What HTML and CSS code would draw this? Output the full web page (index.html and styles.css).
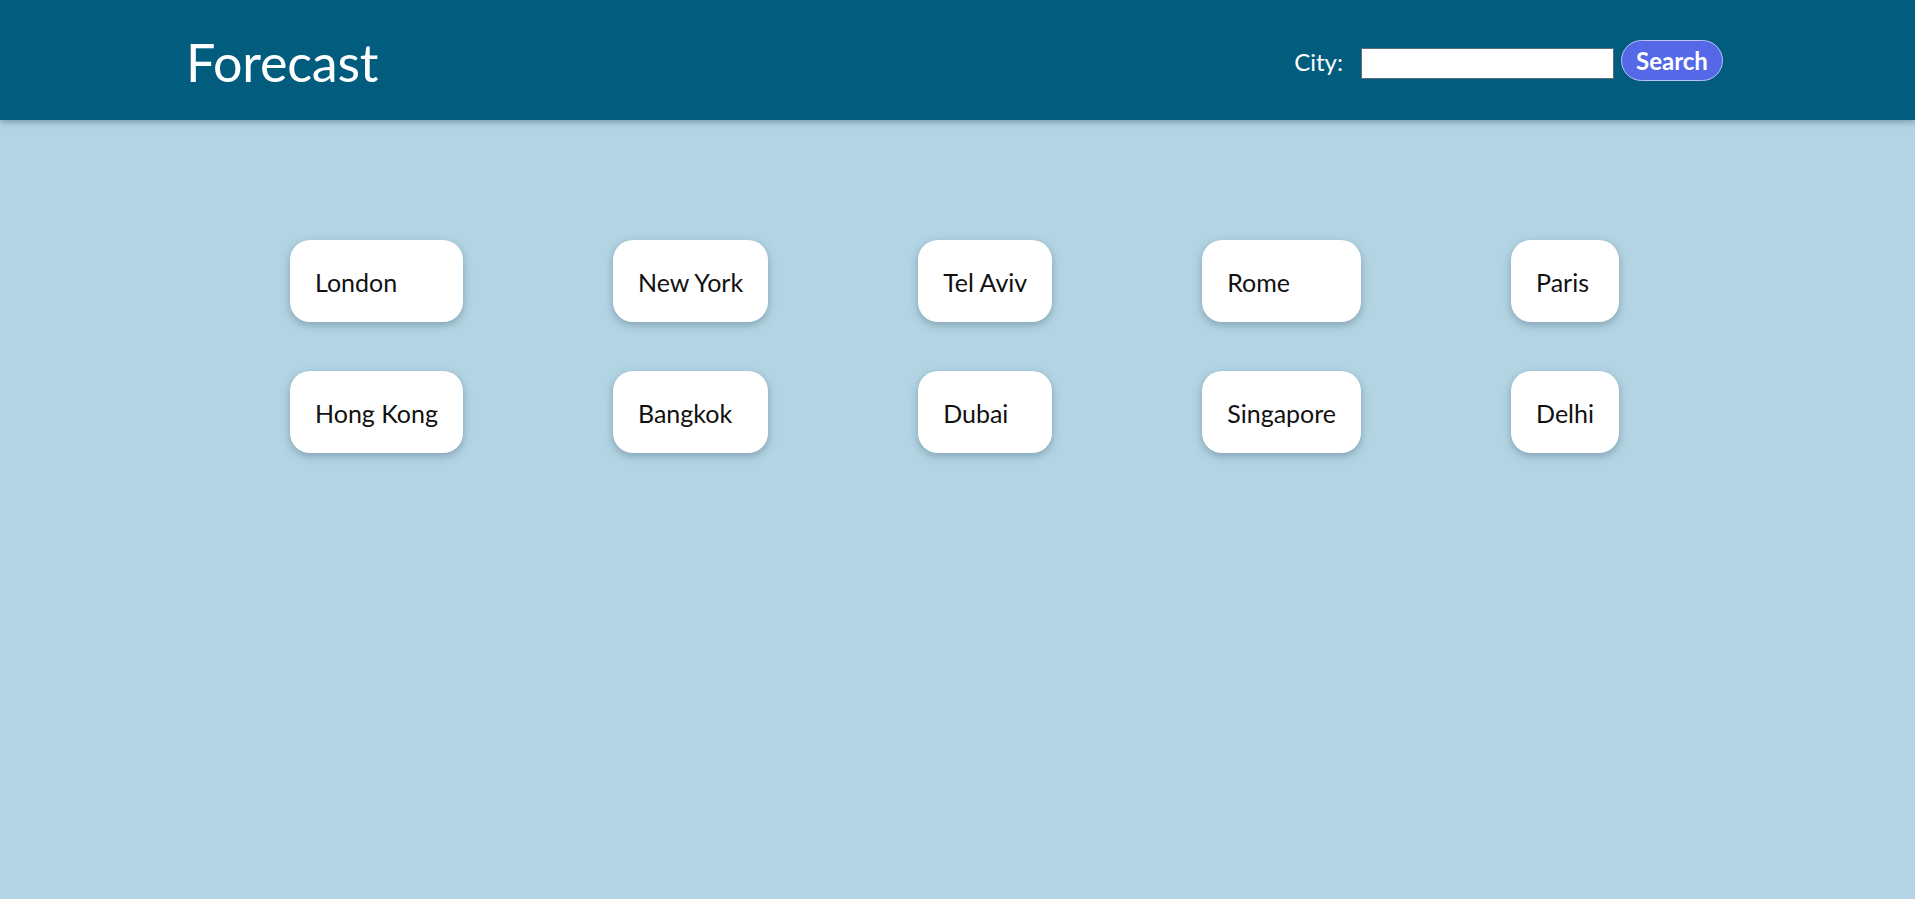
FILE: index.html
```html
<!DOCTYPE html>
<html lang="en">
<head>
<meta charset="utf-8">
<title>Forecast</title>
<link rel="stylesheet" href="styles.css">
</head>
<body>
<header class="topbar">
  <h1 class="brand">Forecast</h1>
  <form class="search">
    <label class="search-label" for="city">City:</label>
    <input class="search-input" id="city" type="text">
    <button class="search-btn" type="button">Search</button>
  </form>
</header>
<main class="cities">
  <div class="city">London</div>
  <div class="city">New York</div>
  <div class="city">Tel Aviv</div>
  <div class="city">Rome</div>
  <div class="city">Paris</div>
  <div class="city">Hong Kong</div>
  <div class="city">Bangkok</div>
  <div class="city">Dubai</div>
  <div class="city">Singapore</div>
  <div class="city">Delhi</div>
</main>
</body>
</html>
```
FILE: styles.css
```css
* { box-sizing: border-box; }
html, body { margin: 0; padding: 0; }
body {
  background: #b3d4e3;
  font-family: "Lato", "Open Sans", sans-serif;
  min-height: 100vh;
}
.topbar {
  height: 120px;
  background: #025c7d;
  padding: 0 192px 0 186px;
  display: flex;
  align-items: center;
  justify-content: space-between;
  box-shadow: 0 2px 6px rgba(0, 40, 60, 0.35);
}
.brand {
  margin: 0;
  color: #ffffff;
  font-weight: 400;
  font-size: 52px;
  letter-spacing: -0.2px;
  position: relative;
  top: 2px;
}
.search {
  display: flex;
  align-items: flex-start;
  align-self: flex-start;
  margin-top: 40px;
}
.search-label {
  color: #ffffff;
  font-size: 24px;
  line-height: 41px;
  margin: 1px 18px 0 0;
}
.search-input {
  width: 253px;
  height: 31px;
  border: 1px solid #5b6e78;
  background: #ffffff;
  margin: 8px 7px 0 0;
  padding: 0 4px;
}
.search-btn {
  height: 41px;
  width: 102px;
  border-radius: 21px;
  border: 1px solid #b9c4f3;
  background: #5468e8;
  color: #ffffff;
  font-family: inherit;
  font-weight: 700;
  font-size: 24px;
  padding: 0;
}
.cities {
  display: grid;
  grid-template-columns: repeat(5, auto);
  justify-content: center;
  column-gap: 150px;
  row-gap: 49px;
  padding: 120px 6px 0 0;
}
.city {
  background: #ffffff;
  border-radius: 20px;
  height: 82px;
  padding: 2px 25px 0;
  display: flex;
  align-items: center;
  font-size: 25px;
  color: #111111;
  box-shadow: 0 3px 8px rgba(40, 70, 90, 0.35);
}
```
